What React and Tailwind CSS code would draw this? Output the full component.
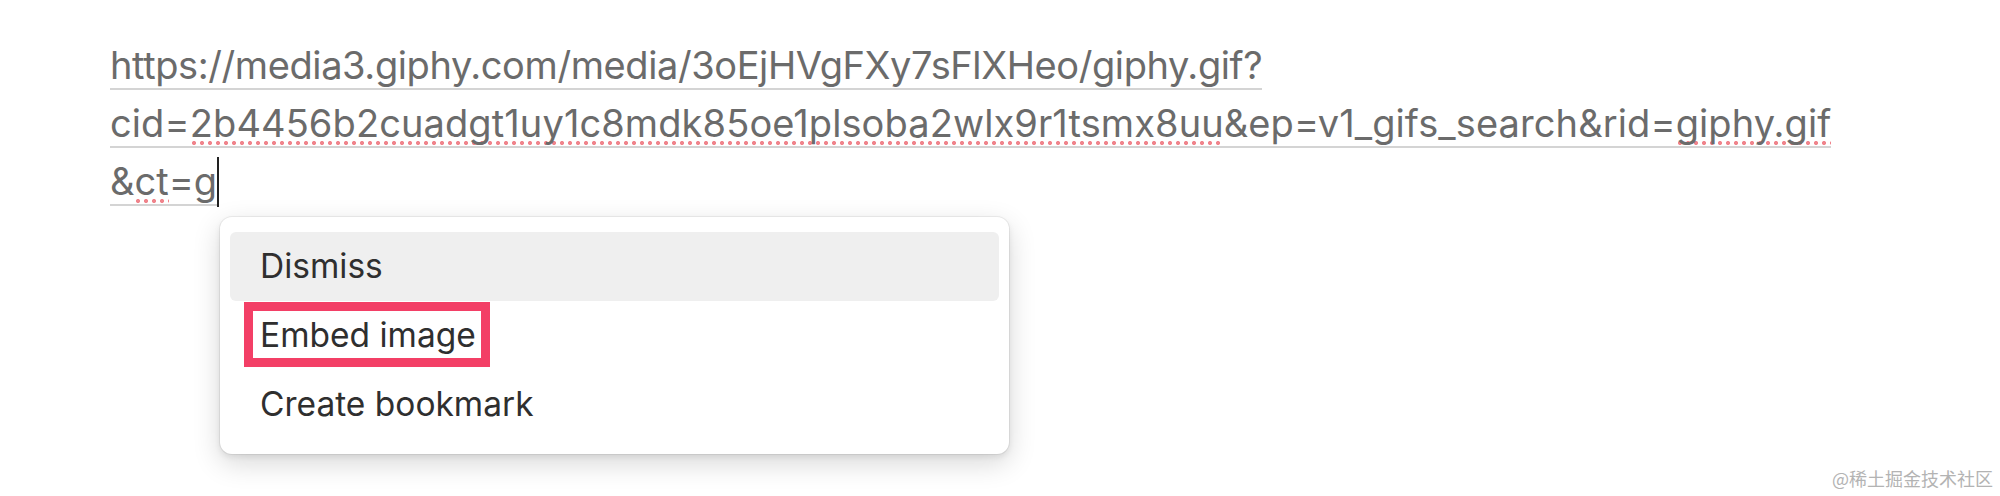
import React from "react";

function Spell({ children }) {
  return (
    <span className="bg-[radial-gradient(circle,#f0848c_1.8px,transparent_2.3px)] bg-[length:8px_6px] bg-repeat-x bg-[position:0_100%]">
      {children}
    </span>
  );
}

export default function App() {
  return (
    <div className="relative w-[2000px] h-[496px] bg-white overflow-hidden">
      <div className="pl-[110px] pt-[36px] text-[38px] leading-[58px] text-[#6b6b6b] font-[Inter,sans-serif]">
        <span className="border-b-2 border-[#d4d4d4]">
          <span className="tracking-[-0.4px]">https://media3.giphy.com/media/3oEjHVgFXy7sFlXHeo/giphy.gif?</span>
          <br />
          <span className="tracking-[0.1px]">
            cid=<Spell>2b4456b2cuadgt1uy1c8mdk85oe1plsoba2wlx9r1tsmx8uu</Spell>&amp;ep=v1_gifs_search&amp;rid=<Spell>giphy.gif</Spell>
          </span>
          <br />
          &amp;<Spell>ct</Spell>=g
        </span>
        <span className="inline-block w-[2px] h-[50px] bg-[#222] align-[-12px]" />
      </div>

      <div className="absolute left-[220px] top-[217px] w-[789px] rounded-[12px] bg-white px-[10px] pt-[15px] pb-[15px] shadow-[0_0_0_1px_rgba(15,15,15,0.06),0_3px_6px_rgba(15,15,15,0.08),0_9px_28px_rgba(15,15,15,0.16)] font-[Inter,sans-serif] text-[33.5px] text-[#2f2f2f]">
        <div className="flex h-[69px] items-center rounded-[6px] bg-[#efefef] pl-[30px]">Dismiss</div>
        <div className="flex h-[69px] items-center pl-[30px]">Embed image</div>
        <div className="flex h-[69px] items-center pl-[30px]">Create bookmark</div>
      </div>

      <div className="absolute left-[244px] top-[302px] w-[246px] h-[65px] border-[9px] border-[#f33f66]" />

      <div className="absolute right-[7px] top-[465px] text-[18px] leading-[26px] text-[#b3b3b3] font-['Noto_Sans_CJK_SC',sans-serif]">
        @稀土掘金技术社区
      </div>
    </div>
  );
}
